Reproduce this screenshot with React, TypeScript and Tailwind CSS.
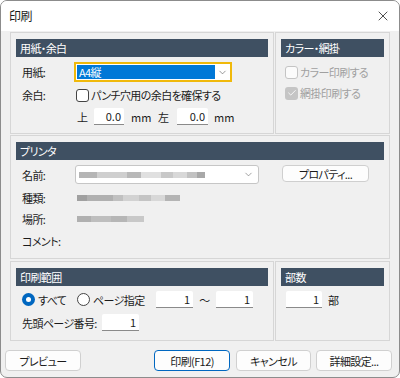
import React from "react";
import { ChevronDown, X, Check } from "lucide-react";

const font = {
  fontFamily: '"Noto Sans CJK JP", "Noto Sans", sans-serif',
};

const Group = ({ title, className, children }: { title: string; className?: string; children?: React.ReactNode }) => (
  <div className={"border border-[#d6d6d6] pt-[6px] px-[5px] " + (className || "")}>
    <div className="h-[18px] bg-[#3f5062] text-white pl-[4px] flex items-center leading-none">{title}</div>
    {children}
  </div>
);

const NumBox = ({ value, w }: { value: string; w: string }) => (
  <div
    className={
      "h-[17px] bg-white border-b border-[#8a8a8a] rounded-t-[2px] flex items-center justify-end pr-[3px] text-[11px] tracking-normal " +
      w
    }
  >
    {value}
  </div>
);

const Blurred = ({ parts }: { parts: [number, string][] }) => (
  <div className="flex h-[6px] blur-[0.6px]">
    {parts.map(([w, c], i) => (
      <div key={i} className="h-full" style={{ width: w, background: c }} />
    ))}
  </div>
);

const Button = ({ label, className }: { label: string; className?: string }) => (
  <div
    className={
      "h-[21px] bg-[#fdfdfd] border rounded-[4px] flex items-center justify-center " + (className || "border-[#d0d0d0]")
    }
  >
    {label}
  </div>
);

export default function App() {
  return (
    <div
      className="w-[400px] h-[378px] flex flex-col bg-[#f0f0f0] border border-[#8c8c8c] rounded-[7px] overflow-hidden text-[11px] leading-[16px] tracking-[-0.6px] text-[#1b1b1b] whitespace-nowrap [font-feature-settings:'palt']"
      style={font}
    >
      {/* title bar */}
      <div className="h-[30px] shrink-0 bg-white flex items-center justify-between pl-[8px] pr-[8px]">
        <span className="text-[12px]">印刷</span>
        <X size={16} strokeWidth={1.2} className="text-[#222]" />
      </div>

      <div className="flex-1 px-[4px] pt-[1px]">
        <div className="mx-[5px]">
          {/* row 1 */}
          <div className="flex gap-[1px] h-[102px]">
            <Group title="用紙・余白" className="w-[264px]">
              <div className="mt-[5px] h-[20px] flex items-center">
                <div className="w-[58px] pl-[6px]">用紙:</div>
                <div className="w-[158px] h-[20px] border-2 border-[#f0b90b] bg-white p-[1px] flex">
                  <div className="flex-1 bg-[#0078d7] text-white pl-[2px] flex items-center leading-none">A4縦</div>
                  <div className="w-[14px] flex items-center justify-center">
                    <ChevronDown size={11} strokeWidth={1.3} className="text-[#555]" />
                  </div>
                </div>
              </div>
              <div className="mt-[5px] h-[16px] flex items-center">
                <div className="w-[60px] pl-[6px]">余白:</div>
                <div className="w-[13px] h-[13px] border border-[#444] rounded-[3px] bg-white" />
                <span className="ml-[2px]">パンチ穴用の余白を確保する</span>
              </div>
              <div className="mt-[5px] h-[17px] flex items-center">
                <div className="w-[61px]" />
                <span className="w-[17px]">上</span>
                <NumBox value="0.0" w="w-[30px]" />
                <span className="ml-[7px] w-[27px] tracking-normal">mm</span>
                <span className="w-[19px]">左</span>
                <NumBox value="0.0" w="w-[31px]" />
                <span className="ml-[6px] tracking-normal">mm</span>
              </div>
            </Group>
            <Group title="カラー・網掛" className="w-[115px]">
              <div className="mt-[8px] h-[14px] flex items-center text-[#a0a0a0]">
                <div className="ml-[4px] w-[13px] h-[13px] border border-[#c4c4c4] rounded-[3px] bg-[#fbfbfb]" />
                <span className="ml-[2px]">カラー印刷する</span>
              </div>
              <div className="mt-[7px] h-[14px] flex items-center text-[#a0a0a0]">
                <div className="ml-[4px] w-[13px] h-[13px] rounded-[3px] bg-[#c5c5c5] flex items-center justify-center">
                  <Check size={10} strokeWidth={2} className="text-white" />
                </div>
                <span className="ml-[2px]">網掛印刷する</span>
              </div>
            </Group>
          </div>

          {/* printer */}
          <Group title="プリンタ" className="mt-[1px] h-[124px]">
            <div className="mt-[5px] h-[19px] flex items-start">
              <div className="w-[59px] pl-[6px] h-[19px] flex items-center">名前:</div>
              <div className="w-[184px] h-[19px] bg-white border border-[#c6c6c6] rounded-[3px] flex items-center pl-[3px] pr-[4px]">
                <Blurred
                  parts={[
                    [18, "#b5b5b5"],
                    [30, "#cfcfcf"],
                    [14, "#b8b8b8"],
                    [20, "#e0e0e0"],
                    [12, "#c8c8c8"],
                    [14, "#d8d8d8"],
                    [10, "#c2c2c2"],
                    [8, "#a8a8a8"],
                  ]}
                />
                <div className="flex-1" />
                <ChevronDown size={11} strokeWidth={1.3} className="text-[#666]" />
              </div>
              <div className="ml-[23px] w-[87px] h-[17px] bg-[#fdfdfd] border border-[#cfcfcf] rounded-[4px] flex items-center justify-center">
                プロパティ...
              </div>
            </div>
            <div className="mt-[6px] h-[16px] flex items-center">
              <div className="w-[61px] pl-[6px]">種類:</div>
              <Blurred
                parts={[
                  [10, "#a0a0a0"],
                  [26, "#b0b0b0"],
                  [10, "#c0c0c0"],
                  [16, "#d2d2d2"],
                  [12, "#c4c4c4"],
                  [14, "#d8d8d8"],
                  [15, "#b4b4b4"],
                ]}
              />
            </div>
            <div className="mt-[5px] h-[16px] flex items-center">
              <div className="w-[61px] pl-[6px]">場所:</div>
              <Blurred
                parts={[
                  [14, "#b0b0b0"],
                  [20, "#bebebe"],
                  [16, "#b6b6b6"],
                  [17, "#c8c8c8"],
                ]}
              />
            </div>
            <div className="mt-[6px] h-[16px] flex items-center">
              <div className="pl-[6px]">コメント:</div>
            </div>
          </Group>

          {/* row 3 */}
          <div className="flex gap-[1px] h-[80px] mt-[2px]">
            <Group title="印刷範囲" className="w-[264px]">
              <div className="mt-[5px] h-[17px] flex items-center">
                <div className="ml-[6px] w-[13px] h-[13px] rounded-full bg-[#0067c0] flex items-center justify-center">
                  <div className="w-[5px] h-[5px] rounded-full bg-white" />
                </div>
                <span className="ml-[3px] w-[39px]">すべて</span>
                <div className="w-[13px] h-[13px] rounded-full border border-[#444] bg-white" />
                <span className="ml-[3px] w-[63px]">ページ指定</span>
                <NumBox value="1" w="w-[37px]" />
                <span className="w-[23px] text-center">～</span>
                <NumBox value="1" w="w-[37px]" />
              </div>
              <div className="mt-[6px] h-[17px] flex items-center">
                <div className="w-[86px] pl-[6px]">先頭ページ番号:</div>
                <NumBox value="1" w="w-[37px]" />
              </div>
            </Group>
            <Group title="部数" className="w-[115px]">
              <div className="mt-[5px] h-[17px] flex items-center">
                <div className="ml-[5px]" />
                <NumBox value="1" w="w-[36px]" />
                <span className="ml-[6px]">部</span>
              </div>
            </Group>
          </div>
        </div>

        {/* buttons */}
        <div className="mt-[9px] flex">
          <Button label="プレビュー" className="w-[76px] border-[#d0d0d0]" />
          <Button label="印刷(F12)" className="ml-[73px] w-[76px] border-[#0067c0]" />
          <Button label="キャンセル" className="ml-[6px] w-[75px] border-[#d0d0d0]" />
          <Button label="詳細設定..." className="ml-[5px] w-[76px] border-[#d0d0d0]" />
        </div>
      </div>
    </div>
  );
}
